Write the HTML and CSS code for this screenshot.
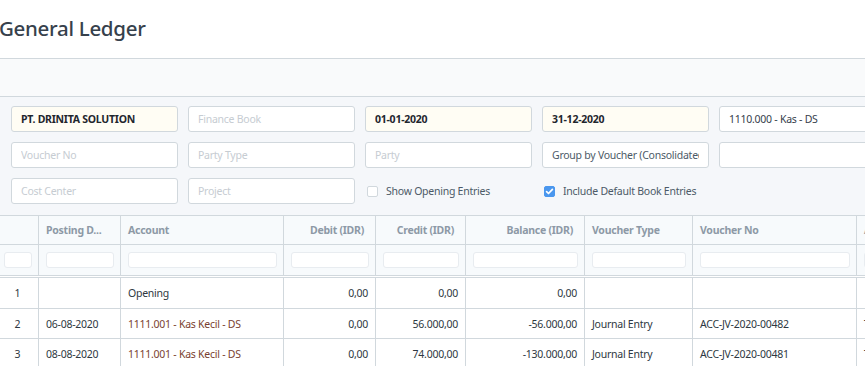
FILE: index.html
```html
<!DOCTYPE html>
<html>
<head>
<meta charset="utf-8">
<link rel="stylesheet" href="styles.css">
</head>
<body>
<div class="page">
  <header class="page-title">
    <h1>General Ledger</h1>
  </header>
  <div class="page-bar"></div>
  <section class="filters">
    <div class="field filled"><span class="bold">PT. DRINITA SOLUTION</span></div>
    <div class="field"><span class="ph">Finance Book</span></div>
    <div class="field filled"><span class="bold">01-01-2020</span></div>
    <div class="field filled"><span class="bold">31-12-2020</span></div>
    <div class="field"><span>1110.000 - Kas - DS</span></div>

    <div class="field"><span class="ph">Voucher No</span></div>
    <div class="field"><span class="ph">Party Type</span></div>
    <div class="field"><span class="ph">Party</span></div>
    <div class="field"><span class="val">Group by Voucher (Consolidated)</span></div>
    <div class="field"><span></span></div>

    <div class="field"><span class="ph">Cost Center</span></div>
    <div class="field"><span class="ph">Project</span></div>
    <label class="check"><span class="box"></span><span>Show Opening Entries</span></label>
    <label class="check"><span class="box on"><svg viewBox="0 0 11 11" width="11" height="11"><path d="M2.6 5.6l1.9 1.9 3.9-4.2" fill="none" stroke="#fff" stroke-width="1.7" stroke-linecap="round" stroke-linejoin="round"/></svg></span><span>Include Default Book Entries</span></label>
    <div class="spacer"></div>
  </section>

  <div class="dt">
    <div class="row head">
      <div class="c"></div>
      <div class="c">Posting D...</div>
      <div class="c">Account</div>
      <div class="c r">Debit (IDR)</div>
      <div class="c r">Credit (IDR)</div>
      <div class="c r">Balance (IDR)</div>
      <div class="c">Voucher Type</div>
      <div class="c">Voucher No</div>
      <div class="c">Against Account</div>
    </div>
    <div class="row filt">
      <div class="c"><span class="fi"></span></div>
      <div class="c"><span class="fi"></span></div>
      <div class="c"><span class="fi"></span></div>
      <div class="c"><span class="fi"></span></div>
      <div class="c"><span class="fi"></span></div>
      <div class="c"><span class="fi"></span></div>
      <div class="c"><span class="fi"></span></div>
      <div class="c"><span class="fi"></span></div>
      <div class="c"><span class="fi"></span></div>
    </div>
    <div class="body">
      <div class="row first">
        <div class="c n">1</div>
        <div class="c"></div>
        <div class="c">Opening</div>
        <div class="c r">0,00</div>
        <div class="c r">0,00</div>
        <div class="c r">0,00</div>
        <div class="c"></div>
        <div class="c"></div>
        <div class="c"></div>
      </div>
      <div class="row">
        <div class="c n">2</div>
        <div class="c">06-08-2020</div>
        <div class="c acc">1111.001 - Kas Kecil - DS</div>
        <div class="c r">0,00</div>
        <div class="c r">56.000,00</div>
        <div class="c r">-56.000,00</div>
        <div class="c">Journal Entry</div>
        <div class="c">ACC-JV-2020-00482</div>
        <div class="c">Transfer - DS</div>
      </div>
      <div class="row">
        <div class="c n">3</div>
        <div class="c">08-08-2020</div>
        <div class="c acc">1111.001 - Kas Kecil - DS</div>
        <div class="c r">0,00</div>
        <div class="c r">74.000,00</div>
        <div class="c r">-130.000,00</div>
        <div class="c">Journal Entry</div>
        <div class="c">ACC-JV-2020-00481</div>
        <div class="c">Transfer - DS</div>
      </div>
    </div>
  </div>
</div>
</body>
</html>
```

FILE: styles.css
```css
* { box-sizing: border-box; }
html, body {
  margin: 0;
  padding: 0;
  background: #fff;
  overflow: hidden;
}
body {
  font-family: "Noto Sans", "Open Sans", sans-serif;
  font-size: 10.5px;
  letter-spacing: -0.25px;
  color: #36414c;
  width: 865px;
  height: 366px;
}
.page { width: 865px; overflow: hidden; }

.page-title {
  height: 59px;
  border-bottom: 1px solid #d1d8dd;
  display: flex;
  align-items: center;
  padding-bottom: 1px;
}
.page-title h1 {
  margin: 0 0 0 -1px;
  font-size: 20.5px;
  letter-spacing: -0.3px;
  font-weight: 500;
  color: #36414c;
  line-height: 1;
}
.page-bar {
  height: 38px;
  background: #f9fafb;
  border-bottom: 1px solid #d1d8dd;
}

.filters {
  background: #f5f7fa;
  padding: 9px 0 11px 11px;
  display: grid;
  grid-template-columns: repeat(5, 167px);
  grid-auto-rows: 26px;
  column-gap: 10px;
  row-gap: 10px;
  width: 900px;
}
.field {
  background: #fff;
  border: 1px solid #d1d8dd;
  border-radius: 3px;
  padding: 0 9px;
  display: flex;
  align-items: center;
  overflow: hidden;
  white-space: nowrap;
  color: #36414c;
}
.field > span {
  flex: 1;
  min-width: 0;
  overflow: hidden;
}
.field.filled { background: #fffdf4; }
.field .bold { font-weight: 700; color: #1f272e; }
.field .ph { color: #c6ccd2; }
.field .val { color: #4c5a67; padding-right: 1px; }

.check {
  display: flex;
  align-items: center;
  gap: 8px;
  padding-left: 2px;
  color: #4c5a67;
  white-space: nowrap;
}
.box {
  width: 11px;
  height: 11px;
  border: 1px solid #d1d8dd;
  border-radius: 2px;
  background: #fff;
  display: inline-flex;
}
.box.on {
  background: #4a97ee;
  border-color: #4a97ee;
}
.box.on svg { margin: -1px; }

.dt {
  margin-left: -3px;
  width: 1010px;
  border-top: 1px solid #d1d8dd;
}
.row {
  display: grid;
  grid-template-columns: 42px 82px 163px 92px 90px 119px 108px 164px 150px;
  border-bottom: 1px solid #d1d8dd;
}
.c {
  border-right: 1px solid #d1d8dd;
  padding: 0 7px;
  display: flex;
  align-items: center;
  white-space: nowrap;
  overflow: hidden;
  color: #2e3841;
}
.c.r { justify-content: flex-end; }
.c.n { justify-content: center; padding: 0; }
.c.acc { color: #7a3f30; }

.head { height: 29px; background: #f7fafc; }
.head .c { font-weight: 700; color: #8d99a6; }
.head .c.r { padding-right: 11px; }

.filt { height: 31px; background: #f7fafc; }
.filt .c { padding: 0 6px 0 7px; }
.fi {
  display: block;
  width: 100%;
  height: 16px;
  background: #fff;
  border: 1px solid #e8ecf0;
  border-radius: 3px;
}

.body { border-top: 1px solid #d1d8dd; margin-top: 1px; }
.body .row { height: 30px; }
.body .row.first { height: 31px; }
```
